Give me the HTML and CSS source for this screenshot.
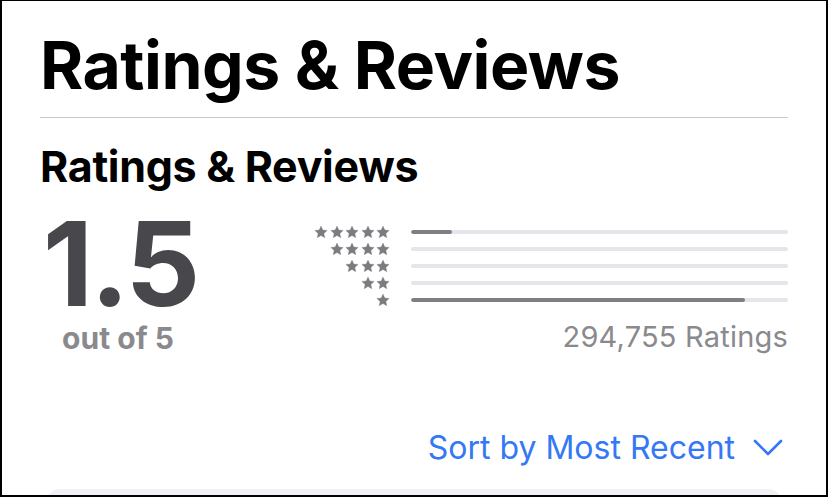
FILE: index.html
```html
<!DOCTYPE html>
<html lang="en">
<head>
  <meta charset="UTF-8">
  <title>Ratings &amp; Reviews</title>
  <link rel="stylesheet" href="styles.css">
</head>
<body>
  <svg width="0" height="0" style="position:absolute">
    <symbol id="star" viewBox="0 0 24 24">
      <path d="M12 1.8L15.06 8.59L22.46 9.4L16.95 14.41L18.47 21.7L12 18L5.53 21.7L7.05 14.41L1.54 9.4L8.94 8.59Z" stroke-linejoin="round"/>
    </symbol>
  </svg>

  <div class="frame">
    <h1 class="page-title">Ratings &amp; Reviews</h1>
    <hr class="divider">

    <h2 class="section-title">Ratings &amp; Reviews</h2>

    <div class="summary">
      <div class="score">
        <div class="score-value">1.5</div>
        <div class="score-max">out of 5</div>
      </div>

      <div class="breakdown">
        <div class="rows">
          <div class="row">
            <span class="stars">
              <svg><use href="#star"/></svg><svg><use href="#star"/></svg><svg><use href="#star"/></svg><svg><use href="#star"/></svg><svg><use href="#star"/></svg>
            </span>
            <span class="bar"><span class="fill" style="width: 11%"></span></span>
          </div>
          <div class="row">
            <span class="stars">
              <svg><use href="#star"/></svg><svg><use href="#star"/></svg><svg><use href="#star"/></svg><svg><use href="#star"/></svg>
            </span>
            <span class="bar"><span class="fill" style="width: 0%"></span></span>
          </div>
          <div class="row">
            <span class="stars">
              <svg><use href="#star"/></svg><svg><use href="#star"/></svg><svg><use href="#star"/></svg>
            </span>
            <span class="bar"><span class="fill" style="width: 0%"></span></span>
          </div>
          <div class="row">
            <span class="stars">
              <svg><use href="#star"/></svg><svg><use href="#star"/></svg>
            </span>
            <span class="bar"><span class="fill" style="width: 0%"></span></span>
          </div>
          <div class="row">
            <span class="stars">
              <svg><use href="#star"/></svg>
            </span>
            <span class="bar"><span class="fill" style="width: 88.5%"></span></span>
          </div>
        </div>
        <div class="count">294,755 Ratings</div>
      </div>
    </div>

    <div class="sort">
      <span>Sort by Most Recent</span>
      <svg class="chevron" width="30" height="18" viewBox="0 0 30 18">
        <path d="M2 2 L15 15 L28 2" fill="none" stroke="#3478f6" stroke-width="2.6" stroke-linecap="round" stroke-linejoin="round"/>
      </svg>
    </div>

    <div class="review-card"></div>
  </div>
</body>
</html>
```

FILE: styles.css
```css
html, body {
  margin: 0;
  height: 100%;
}

body {
  font-family: Inter, "Noto Sans", sans-serif;
  background: #fff;
  color: #000;
}

.frame {
  box-sizing: border-box;
  height: 497px;
  border: 2px solid #000;
  border-top-width: 1px;
  padding: 0 38px;
  overflow: hidden;
}

.page-title {
  margin: 26px 0 0;
  font-size: 66px;
  font-weight: 700;
  letter-spacing: -0.5px;
  line-height: 76px;
}

.divider {
  border: none;
  border-top: 1px solid #c8c8cc;
  margin: 14px 0 0;
}

.section-title {
  margin: 23px 0 0;
  font-size: 43px;
  font-weight: 700;
  letter-spacing: -0.3px;
  line-height: 50px;
}

.summary {
  display: flex;
}

.score {
  width: 160px;
  text-align: center;
}

.score-value {
  font-size: 117px;
  font-weight: 700;
  color: #48484c;
  letter-spacing: -3px;
  line-height: 90px;
  margin-top: 28px;
}

.score-max {
  font-size: 30px;
  font-weight: 700;
  color: #8a8a8e;
  line-height: 30px;
  margin-top: 14px;
  margin-left: -4px;
}

.breakdown {
  flex: 1;
  margin-left: 110px;
  padding-top: 34px;
}

.rows {
  display: flex;
  flex-direction: column;
  gap: 4px;
}

.row {
  display: flex;
  align-items: center;
  height: 13px;
}

.stars {
  width: 80px;
  display: flex;
  justify-content: flex-end;
  gap: 1.4px;
  margin-right: -1px;
  fill: #7b7b80;
  stroke: #7b7b80;
  stroke-width: 0.6px;
}

.stars svg {
  width: 14px;
  height: 14px;
}

.bar {
  flex: 1;
  height: 4px;
  margin-left: 22px;
  border-radius: 2px;
  background: #e5e5ea;
  overflow: hidden;
}

.fill {
  display: block;
  height: 100%;
  background: #7e7e83;
  border-radius: 2px;
}

.count {
  text-align: right;
  font-size: 29px;
  letter-spacing: 0.2px;
  color: #8a8a8e;
  margin-top: 14px;
  line-height: 34px;
}

.sort {
  display: flex;
  justify-content: flex-end;
  align-items: center;
  gap: 18px;
  margin-top: 74px;
  margin-right: 5px;
  color: #3478f6;
  font-size: 32px;
  line-height: 40px;
}

.review-card {
  margin-top: 21px;
  height: 40px;
  margin-left: 6px;
  margin-right: 6px;
  border-radius: 14px;
  background: #f1f1f5;
}
```
